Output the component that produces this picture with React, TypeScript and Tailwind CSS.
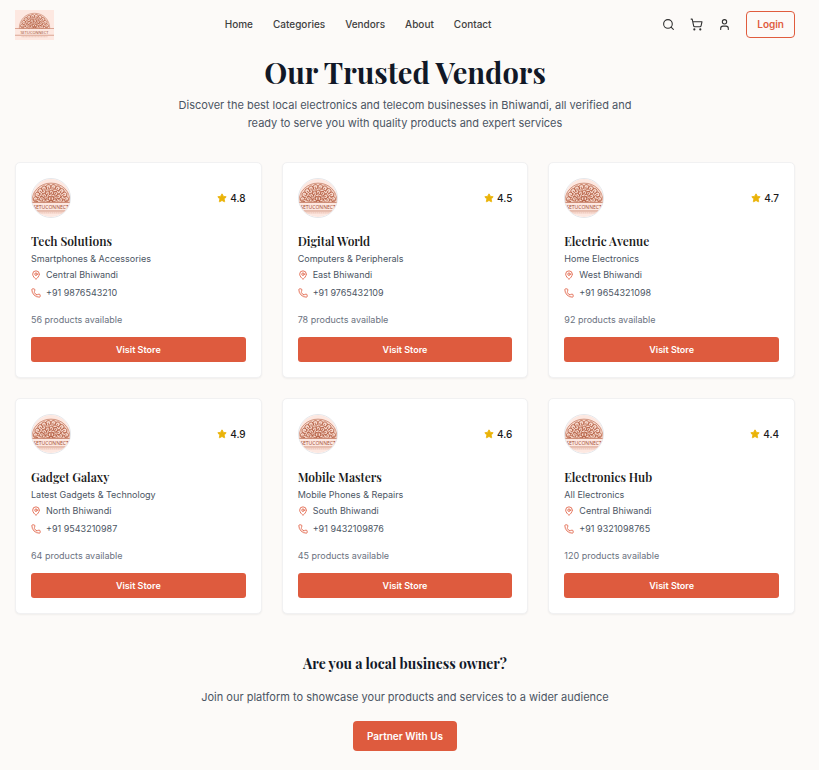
import React from "react";
import { MapPin, Phone, Search, ShoppingCart, Star, User } from "lucide-react";

const links = ["Home", "Categories", "Vendors", "About", "Contact"];

const vendors = [
  { name: "Tech Solutions", kind: "Smartphones & Accessories", place: "Central Bhiwandi", phone: "+91 9876543210", products: 56, rating: "4.8" },
  { name: "Digital World", kind: "Computers & Peripherals", place: "East Bhiwandi", phone: "+91 9765432109", products: 78, rating: "4.5" },
  { name: "Electric Avenue", kind: "Home Electronics", place: "West Bhiwandi", phone: "+91 9654321098", products: 92, rating: "4.7" },
  { name: "Gadget Galaxy", kind: "Latest Gadgets & Technology", place: "North Bhiwandi", phone: "+91 9543210987", products: 64, rating: "4.9" },
  { name: "Mobile Masters", kind: "Mobile Phones & Repairs", place: "South Bhiwandi", phone: "+91 9432109876", products: 45, rating: "4.6" },
  { name: "Electronics Hub", kind: "All Electronics", place: "Central Bhiwandi", phone: "+91 9321098765", products: 120, rating: "4.4" },
];

const serif = "font-['Playfair_Display','Liberation_Serif',serif]";

// Leaves fan out from the centre of the dome at these angles.
const outerLeaves = [-78, -60, -43, -26, -9, 9, 26, 43, 60, 78];
const middleLeaves = [-72, -48, -24, 0, 24, 48, 72];
const innerLeaves = [-60, -20, 20, 60];

function Logo({ className, viewBox }: { className: string; viewBox: string }) {
  return (
    <svg viewBox={viewBox} preserveAspectRatio="none" className={className} role="img" aria-label="SetuConnect">
      <rect width="156" height="120" fill="#fde8e1" />
      <path d="M17 74C17 38 44 13 78 13s61 25 61 61z" fill="#f6d8cc" stroke="#bd6c50" strokeWidth="2" />
      <g fill="none" stroke="#b25a3d" strokeWidth="2.4" strokeLinecap="round">
        {outerLeaves.map((angle) => (
          <path key={angle} transform={`rotate(${angle} 78 74)`} d="M72 32c-5-7-2-14 6-15 8 1 10 9 5 13-5 3-9-1-6-5M78 38v-5" />
        ))}
        {middleLeaves.map((angle) => (
          <path key={angle} transform={`rotate(${angle} 78 74)`} d="M84 50c6-5 4-12-4-14-7 0-10 6-6 10 4 3 8 0 6-4M70 52l4-4" />
        ))}
        {innerLeaves.map((angle) => (
          <path key={angle} transform={`rotate(${angle} 78 74)`} d="M78 68c-6-4-6-8 0-14 6 6 6 10 0 14z" />
        ))}
        <path d="M58 74c0-12 8-19 20-19s20 7 20 19M24 66l10 5M132 66l-10 5" />
      </g>
      <path d="M0 74h156M0 101h156" stroke="#cf8f79" strokeWidth="3" />
      <text x="78" y="94" textAnchor="middle" fontSize="16" fill="#a14a30" className="font-['Open_Sans',sans-serif]">
        SETUCONNECT
      </text>
      <path d="M26 107h104" stroke="#e8bbab" strokeWidth="3" strokeDasharray="5 1" />
    </svg>
  );
}

export default function App() {
  return (
    <div className="min-h-screen bg-[#fcfaf8] pr-6 pl-[15px] font-['Inter',sans-serif] text-[#1a1a1a]">
      <header className="flex h-[49px] items-center justify-between">
        <a href="#home">
          <Logo className="h-[30px] w-[39px]" viewBox="0 0 156 120" />
        </a>
        <nav className="flex gap-5 text-[10px] font-medium text-[#404040]">
          {links.map((link) => (
            <a key={link} href={`#${link.toLowerCase()}`}>{link}</a>
          ))}
        </nav>
        <div className="flex items-center gap-[15px] text-[#303030]">
          <button type="button" aria-label="Search"><Search size={13} /></button>
          <button type="button" aria-label="Cart"><ShoppingCart size={13} /></button>
          <button type="button" aria-label="Account"><User size={13} /></button>
          <button type="button" className="h-[27px] rounded-[4px] border border-[#e05c3e] px-[10px] text-[10px] font-semibold text-[#e05c3e]">
            Login
          </button>
        </div>
      </header>

      <main>
        <section className="flex flex-col items-center text-center">
          <h1 className={`${serif} mt-1 text-[29px] leading-[38px] font-bold text-[#111827]`}>Our Trusted Vendors</h1>
          <p className="mt-[5px] max-w-[480px] text-[11px] leading-[18px] text-[#4b5563]">
            Discover the best local electronics and telecom businesses in Bhiwandi, all verified and ready to serve you with quality products and expert services
          </p>
        </section>

        <section className="mt-[30px] grid grid-cols-3 gap-5">
          {vendors.map((v) => (
            <article key={v.name} className="rounded-[5px] border border-[#f1f1f2] bg-white p-[15px] text-[9px] leading-4 text-[#4b5563] shadow-xs">
              <div className="flex items-center justify-between">
                <Logo className="size-10 rounded-full border border-[#e5e7eb]" viewBox="18 0 120 120" />
                <span className="flex items-center gap-[3px] text-[10px] font-medium text-[#1a1a1a]">
                  <Star size={10} className="fill-[#eab308] text-[#eab308]" />
                  {v.rating}
                </span>
              </div>
              <h2 className={`${serif} mt-[13px] text-[12px] leading-5 font-semibold text-[#1a1a1a]`}>{v.name}</h2>
              <p>{v.kind}</p>
              <p className="flex items-center gap-[5px]">
                <MapPin size={10} className="text-[#e05c3e]" />
                {v.place}
              </p>
              <p className="mt-[2px] flex items-center gap-[5px]">
                <Phone size={10} className="text-[#e05c3e]" />
                {v.phone}
              </p>
              <p className="mt-[11px] text-[#6b7280]">{v.products} products available</p>
              <button type="button" className="mt-[9px] h-[25px] w-full rounded-[3px] bg-[#de5b3e] font-semibold text-white">
                Visit Store
              </button>
            </article>
          ))}
        </section>

        <section className="mt-10 flex flex-col items-center text-center">
          <h2 className={`${serif} text-[14px] leading-5 font-bold text-[#111827]`}>Are you a local business owner?</h2>
          <p className="mt-[14px] text-[11px] leading-[18px] text-[#4b5563]">
            Join our platform to showcase your products and services to a wider audience
          </p>
          <button type="button" className="mt-[15px] h-[30px] rounded-[4px] bg-[#de5b3e] px-[14px] text-[10px] font-semibold text-white">
            Partner With Us
          </button>
        </section>
      </main>
    </div>
  );
}
